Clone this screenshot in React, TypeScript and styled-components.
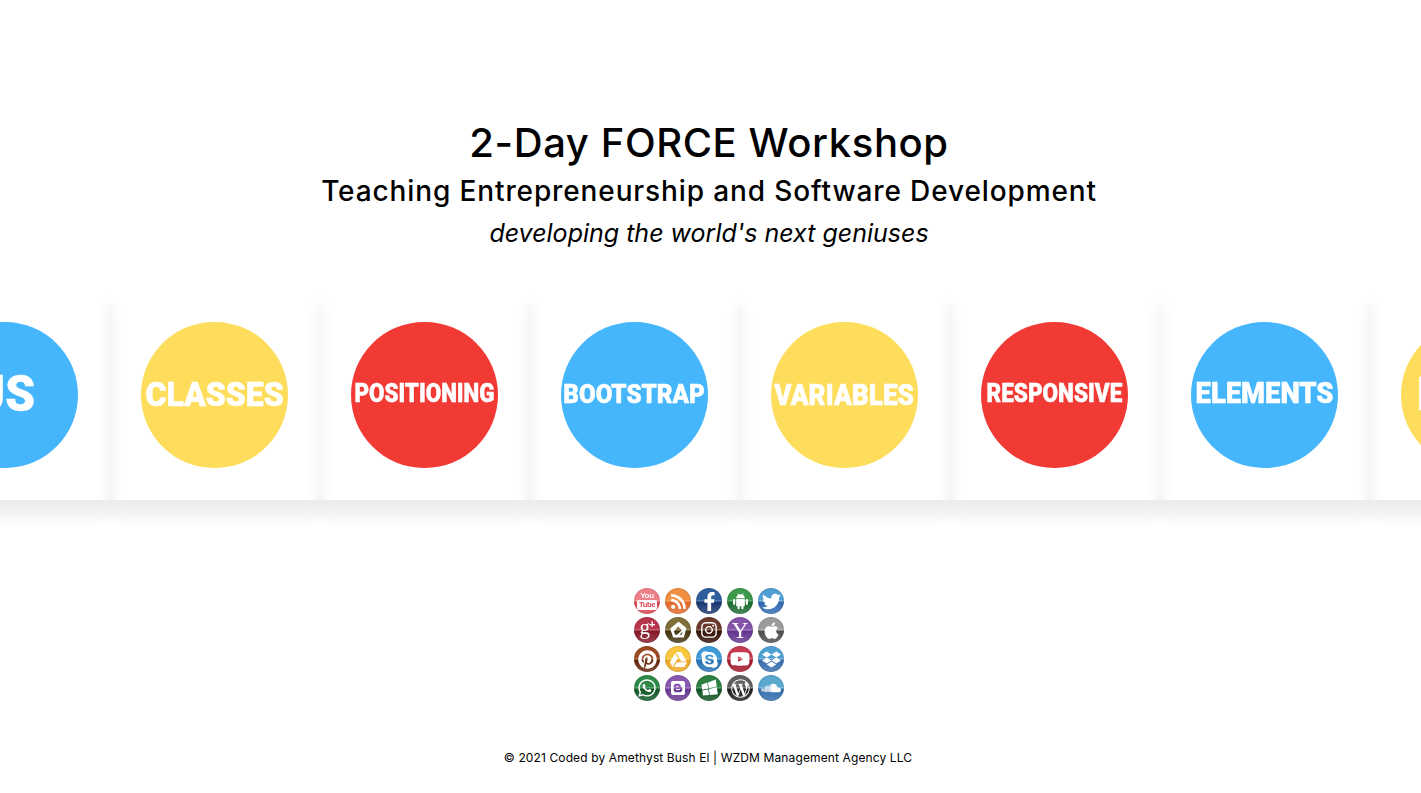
import React from "react";
import styled, { createGlobalStyle } from "styled-components";
import {
  FaYoutube, FaRss, FaFacebookF, FaTwitter, FaInstagram, FaApple,
  FaPinterest, FaGoogleDrive, FaSkype, FaDropbox, FaWhatsapp, FaBlogger, FaWindows,
  FaWordpressSimple, FaSoundcloud,
} from "react-icons/fa";

const Global = createGlobalStyle`
  html, body { margin: 0; padding: 0; background: #fff; }
  body { font-family: Inter, "Open Sans", sans-serif; color: #000; overflow-x: hidden; }
`;

const Page = styled.div`
  display: flex;
  flex-direction: column;
  height: 793px;
  overflow: hidden;
`;

const Header = styled.header`
  display: flex;
  flex-direction: column;
  align-items: center;
  padding: 113px 3px 0 0;
  height: 177px;
`;

const Title = styled.h1`
  margin: 0;
  font-size: 40px;
  line-height: 60px;
  font-weight: 500;
  letter-spacing: 0.6px;
`;

const Subtitle = styled.h2`
  margin: 0;
  font-size: 28px;
  line-height: 36px;
  font-weight: 500;
  letter-spacing: 0.88px;
`;

const Tagline = styled.h3`
  margin: 5px 0 0;
  font-size: 25px;
  line-height: 39px;
  font-weight: 400;
  font-style: italic;
`;

const Strip = styled.section`
  display: flex;
  flex: none;
  margin-left: -100px;
  width: 1900px;
`;

const Card = styled.div`
  flex: none;
  width: 210px;
  height: 210px;
  display: flex;
  align-items: center;
  justify-content: center;
  box-shadow: 0 15px 15px rgba(0, 0, 0, 0.08);
`;

const Ball = styled.div<{ $color: string }>`
  width: 146.5px;
  height: 146.5px;
  border-radius: 50%;
  background: ${(p) => p.$color};
  display: flex;
  align-items: center;
  justify-content: center;
  overflow: hidden;
  flex: none;
  margin-left: -1px;
`;

const BallLabel = styled.span<{ $size: number; $lift: number; $squeeze: number }>`
  font-family: Roboto, "Liberation Sans", sans-serif;
  font-weight: 900;
  color: #fff;
  font-size: ${(p) => p.$size}px;
  line-height: 1;
  margin-top: ${(p) => p.$lift}px;
  white-space: nowrap;
  -webkit-text-stroke: 0.5px #fff;
  transform: scaleX(${(p) => p.$squeeze});
`;

const Social = styled.div`
  display: grid;
  grid-template-columns: repeat(5, 26px);
  grid-auto-rows: 26px;
  column-gap: 5px;
  row-gap: 3px;
  justify-content: center;
  padding: 88px 3px 0 0;
`;

const SocialIcon = styled.a<{ $top: string; $mid: string; $bot: string }>`
  width: 26px;
  height: 26px;
  border-radius: 50%;
  display: flex;
  align-items: center;
  justify-content: center;
  color: #fff;
  overflow: hidden;
  filter: blur(0.55px);
  box-shadow: inset 0 0 2px rgba(0, 0, 0, 0.3);
  background:
    linear-gradient(180deg, transparent 55%, rgba(255, 255, 255, 0.2) 100%),
    linear-gradient(
      180deg,
      ${(p) => p.$top} 0%,
      ${(p) => p.$top} 44%,
      ${(p) => p.$mid} 49%,
      ${(p) => p.$bot} 55%,
      ${(p) => p.$bot} 100%
    );
`;

const YTStack = styled.span`
  display: flex;
  flex-direction: column;
  align-items: center;
  font-family: "Liberation Sans", sans-serif;
  font-weight: 700;
  line-height: 1;
`;
const YTYou = styled.span`
  font-size: 8px;
  letter-spacing: -0.3px;
`;
const YTTube = styled.span`
  font-size: 7.5px;
  background: #fff;
  color: #d9434f;
  border-radius: 2px;
  padding: 1px 1.5px;
  letter-spacing: -0.3px;
`;
const YahooY = styled.span`
  font-family: "Liberation Serif", serif;
  font-size: 23px;
  line-height: 1;
`;
const GooglePlusMark = styled.span`
  font-family: "Liberation Serif", serif;
  font-size: 21px;
  line-height: 1;
  margin-top: -5px;
  letter-spacing: -1px;
`;
const GooglePlusSup = styled.sup`
  font-family: "Liberation Sans", sans-serif;
  font-size: 11px;
  font-weight: 700;
  vertical-align: 6px;
  line-height: 0;
`;
const TiltedFlag = styled.span`
  display: flex;
  transform: rotate(-8deg) skewY(-4deg);
`;

const PicasaGlyph = () => (
  <svg width="19" height="19" viewBox="0 0 24 24" fill="none" stroke="#fff" strokeWidth="3.4">
    <path d="M12 3 20 9.5 17.5 19H6.5L3.5 10z" />
    <path d="M3.5 14 13 4M9 3.5 20 13M20 9.5 9 20" strokeWidth="2.2" />
  </svg>
);

const AndroidGlyph = () => (
  <svg width="19" height="20" viewBox="0 0 24 24" fill="#fff">
    <path d="M6.5 8.6a5.5 5 0 0 1 11 0z" />
    <path d="M8.6 2.2 10 4.4M15.4 2.2 14 4.4" stroke="#fff" strokeWidth="1" />
    <rect x="6.5" y="9.6" width="11" height="9" rx="1.2" />
    <rect x="2.6" y="9.4" width="2.8" height="7.6" rx="1.4" />
    <rect x="18.6" y="9.4" width="2.8" height="7.6" rx="1.4" />
    <rect x="8.2" y="17" width="2.8" height="5.4" rx="1.4" />
    <rect x="13" y="17" width="2.8" height="5.4" rx="1.4" />
  </svg>
);

const Footer = styled.footer`
  margin-top: 48px;
  text-align: center;
  font-size: 12px;
  line-height: 18px;
  padding-right: 5px;
  letter-spacing: 0.12px;
`;

const cards: { label: string; color: string; size: number; lift: number; squeeze: number }[] = [
  { label: "US", color: "#45b6fb", size: 50, lift: -3, squeeze: 0.95 },
  { label: "CLASSES", color: "#fddd5b", size: 34, lift: -3, squeeze: 0.94 },
  { label: "POSITIONING", color: "#f23a35", size: 26, lift: -5, squeeze: 0.86 },
  { label: "BOOTSTRAP", color: "#45b6fb", size: 26, lift: -3, squeeze: 0.93 },
  { label: "VARIABLES", color: "#fddd5b", size: 29, lift: 0, squeeze: 0.905 },
  { label: "RESPONSIVE", color: "#f23a35", size: 25, lift: -4, squeeze: 0.9 },
  { label: "ELEMENTS", color: "#45b6fb", size: 30, lift: -5, squeeze: 0.913 },
  { label: "HTML", color: "#fddd5b", size: 46, lift: -2, squeeze: 0.92 },
];

const icons: { key: string; top: string; mid: string; bot: string; glyph: React.ReactNode }[] = [
  { key: "yt", top: "#ee7f88", mid: "#f3a3a8", bot: "#d8404c", glyph: <YTStack><YTYou>You</YTYou><YTTube>Tube</YTTube></YTStack> },
  { key: "rss", top: "#f18f42", mid: "#f4a868", bot: "#e4682a", glyph: <FaRss size={17} /> },
  { key: "fb", top: "#2f5f9c", mid: "#5a80b0", bot: "#183670", glyph: <FaFacebookF size={19} /> },
  { key: "an", top: "#3d9a4c", mid: "#68ad72", bot: "#1a6c2e", glyph: <AndroidGlyph /> },
  { key: "tw", top: "#4f9fd4", mid: "#86b8dc", bot: "#2f68b0", glyph: <FaTwitter size={19} /> },
  { key: "gp", top: "#b8344c", mid: "#c86a7a", bot: "#851628", glyph: <GooglePlusMark>g<GooglePlusSup>+</GooglePlusSup></GooglePlusMark> },
  { key: "pic", top: "#7f6f3a", mid: "#a09468", bot: "#423410", glyph: <PicasaGlyph /> },
  { key: "ig", top: "#6b3a2c", mid: "#967462", bot: "#331004", glyph: <FaInstagram size={18} /> },
  { key: "ya", top: "#8453a8", mid: "#a07dbc", bot: "#623590", glyph: <YahooY>Y</YahooY> },
  { key: "ap", top: "#9c9c9c", mid: "#b8b8b8", bot: "#4e4e4e", glyph: <FaApple size={19} /> },
  { key: "pin", top: "#9c4a22", mid: "#b07a58", bot: "#642408", glyph: <FaPinterest size={19} /> },
  { key: "gd", top: "#f9c73e", mid: "#fad674", bot: "#eea824", glyph: <FaGoogleDrive size={17} /> },
  { key: "sk", top: "#3f9bd8", mid: "#78b6e0", bot: "#2672b8", glyph: <FaSkype size={19} /> },
  { key: "yt2", top: "#c83c52", mid: "#d67886", bot: "#a4162a", glyph: <FaYoutube size={20} /> },
  { key: "db", top: "#4fa0d4", mid: "#84b8dc", bot: "#346cac", glyph: <FaDropbox size={19} /> },
  { key: "wa", top: "#2e8a48", mid: "#68ab7a", bot: "#105826", glyph: <FaWhatsapp size={20} /> },
  { key: "bl", top: "#8a58b0", mid: "#a584c2", bot: "#683894", glyph: <FaBlogger size={16} /> },
  { key: "win", top: "#2c8040", mid: "#68a278", bot: "#0e5222", glyph: <TiltedFlag><FaWindows size={17} /></TiltedFlag> },
  { key: "wp", top: "#606060", mid: "#929292", bot: "#1e1e1e", glyph: <FaWordpressSimple size={19} /> },
  { key: "sc", top: "#5aa8d0", mid: "#8cbedc", bot: "#306cac", glyph: <FaSoundcloud size={20} /> },
];

export default function App() {
  return (
    <Page>
      <Global />
      <Header>
        <Title>2-Day FORCE Workshop</Title>
        <Subtitle>Teaching Entrepreneurship and Software Development</Subtitle>
        <Tagline>developing the world's next geniuses</Tagline>
      </Header>
      <Strip>
        {cards.map((c) => (
          <Card key={c.label}>
            <Ball $color={c.color}>
              <BallLabel $size={c.size} $lift={c.lift} $squeeze={c.squeeze}>{c.label}</BallLabel>
            </Ball>
          </Card>
        ))}
      </Strip>
      <Social>
        {icons.map((i) => (
          <SocialIcon key={i.key} $top={i.top} $mid={i.mid} $bot={i.bot}>{i.glyph}</SocialIcon>
        ))}
      </Social>
      <Footer>© 2021 Coded by Amethyst Bush El | WZDM Management Agency LLC</Footer>
    </Page>
  );
}
